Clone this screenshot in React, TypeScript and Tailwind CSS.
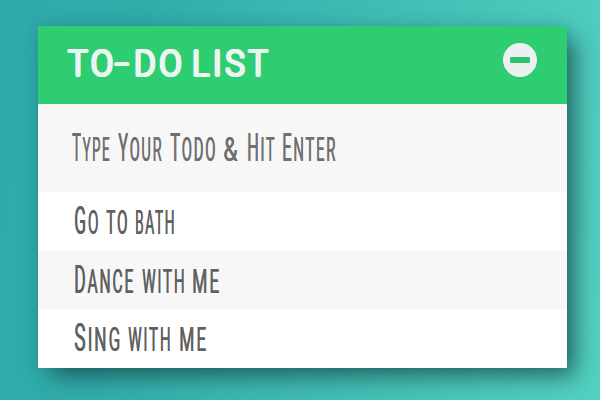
import { useLayoutEffect, useRef, useState } from "react";
import clsx from "clsx";

type WordSpec = { text: string; width: number; gap?: number; small?: boolean };

/* Condenses a word horizontally so that it fills its slot. */
function Word({ text, width, gap = 0, small, title }: WordSpec & { title?: boolean }) {
  const ref = useRef<HTMLSpanElement>(null);
  const [scale, setScale] = useState(1);
  useLayoutEffect(() => {
    if (ref.current) setScale(width / ref.current.offsetWidth);
  }, [width, text]);
  return (
    <span className="block shrink-0" style={{ width, marginLeft: gap }}>
      <span
        ref={ref}
        className={clsx(
          "inline-block origin-left whitespace-nowrap",
          !title && "uppercase",
          !title && !small && "first-letter:text-[38px]",
        )}
        style={{ transform: `scaleX(${scale})` }}
      >
        {text}
      </span>
    </span>
  );
}

function Line({ words, className }: { words: WordSpec[]; className?: string }) {
  return (
    <div
      className={clsx(
        "flex items-baseline pl-9 font-['Roboto',sans-serif] text-[34px] leading-[40px] tracking-[4px] [text-shadow:0.9px_0_0_currentColor]",
        className,
      )}
    >
      {words.map((w, i) => (
        <Word key={i} {...w} />
      ))}
    </div>
  );
}

const placeholder: WordSpec[] = [
  { text: "Type", width: 39, gap: -2 },
  { text: "Your", width: 45, gap: 7 },
  { text: "Todo", width: 47, gap: 7 },
  { text: "&", width: 17, gap: 6 },
  { text: "Hit", width: 29, gap: 7 },
  { text: "Enter", width: 55, gap: 6 },
];

const todos: WordSpec[][] = [
  [
    { text: "Go", width: 26 },
    { text: "to", width: 23, gap: 6, small: true },
    { text: "bath", width: 41, gap: 6, small: true },
  ],
  [
    { text: "Dance", width: 61 },
    { text: "with", width: 44, gap: 7, small: true },
    { text: "me", width: 29, gap: 6, small: true },
  ],
  [
    { text: "Sing", width: 48 },
    { text: "with", width: 44, gap: 6, small: true },
    { text: "me", width: 29, gap: 7, small: true },
  ],
];

const heading: WordSpec[] = [
  { text: "TO", width: 49 },
  { text: "-", width: 19, gap: -2 },
  { text: "DO", width: 51, gap: 0 },
  { text: "LIST", width: 79, gap: 7 },
];

export default function App() {
  return (
    <div className="h-[400px] w-[600px] overflow-hidden bg-[linear-gradient(100deg,#2fa9aa_0%,#31acab_22%,#43beb5_60%,#53d2c2_100%)] pl-[38px] pt-[26px]">
      <main className="w-[528.5px] bg-white shadow-[11px_11px_22px_-3px_rgba(20,60,60,0.68),0_0_12px_rgba(40,90,120,0.25)]">
        <header className="flex h-[78px] items-start justify-between bg-[#2fcd71] pl-[30px] pr-[30px]">
          <h1 className="mt-[18px] flex items-baseline font-['Roboto',sans-serif] text-[37px] font-light leading-[40px] tracking-[4px] text-[#ecf5f1] [text-shadow:1.7px_0_0_currentColor,-1.7px_0_0_currentColor,0_1.4px_0_currentColor,0_-1.4px_0_currentColor,1.1px_1.1px_0_currentColor,-1.1px_1.1px_0_currentColor,1.1px_-1.1px_0_currentColor,-1.1px_-1.1px_0_currentColor]">
            {heading.map((w, i) => (
              <Word key={i} {...w} title />
            ))}
          </h1>
          <button
            aria-label="Collapse"
            className="mt-[17px] flex size-[34px] items-center justify-center rounded-full bg-[#ecf0f1]"
          >
            <span className="h-[6px] w-5 rounded-[1px] bg-[#2fc26e]" />
          </button>
        </header>
        <div className="h-[88px] bg-[#f7f7f7] pt-[24px]">
          <Line words={placeholder} className="text-[#6f6f6f]" />
        </div>
        <ul>
          {todos.map((t, i) => (
            <li key={i} className="h-[58.5px] pt-[9px] even:bg-[#f7f7f7]">
              <Line words={t} className="text-[#606060]" />
            </li>
          ))}
        </ul>
      </main>
    </div>
  );
}
